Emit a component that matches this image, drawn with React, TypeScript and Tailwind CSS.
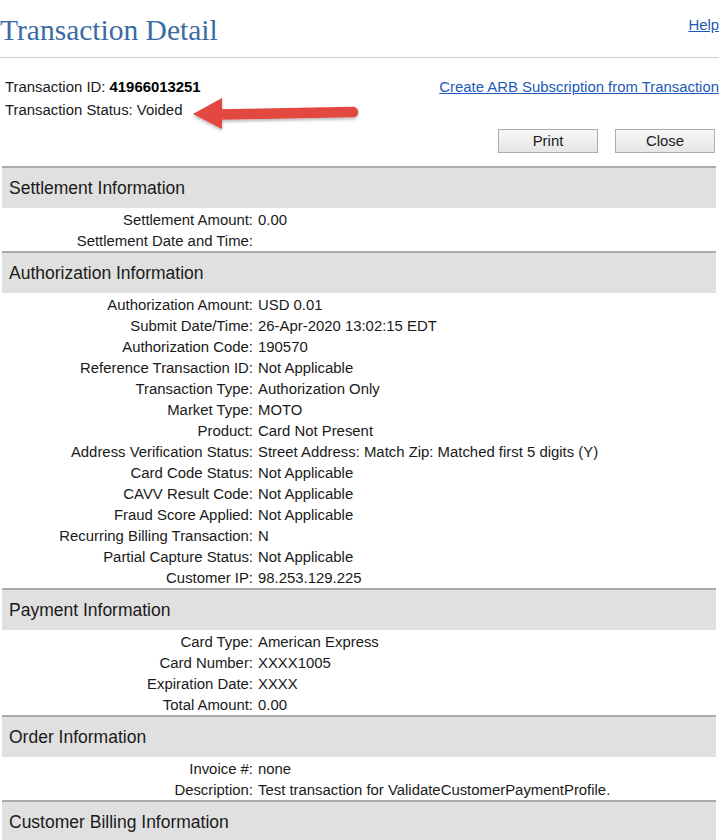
import React from "react";

type Row = [string, string];

const sections: { title: string; rows: Row[] }[] = [
  {
    title: "Settlement Information",
    rows: [
      ["Settlement Amount:", "0.00"],
      ["Settlement Date and Time:", ""],
    ],
  },
  {
    title: "Authorization Information",
    rows: [
      ["Authorization Amount:", "USD 0.01"],
      ["Submit Date/Time:", "26-Apr-2020 13:02:15 EDT"],
      ["Authorization Code:", "190570"],
      ["Reference Transaction ID:", "Not Applicable"],
      ["Transaction Type:", "Authorization Only"],
      ["Market Type:", "MOTO"],
      ["Product:", "Card Not Present"],
      ["Address Verification Status:", "Street Address: Match Zip: Matched first 5 digits (Y)"],
      ["Card Code Status:", "Not Applicable"],
      ["CAVV Result Code:", "Not Applicable"],
      ["Fraud Score Applied:", "Not Applicable"],
      ["Recurring Billing Transaction:", "N"],
      ["Partial Capture Status:", "Not Applicable"],
      ["Customer IP:", "98.253.129.225"],
    ],
  },
  {
    title: "Payment Information",
    rows: [
      ["Card Type:", "American Express"],
      ["Card Number:", "XXXX1005"],
      ["Expiration Date:", "XXXX"],
      ["Total Amount:", "0.00"],
    ],
  },
  {
    title: "Order Information",
    rows: [
      ["Invoice #:", "none"],
      ["Description:", "Test transaction for ValidateCustomerPaymentProfile."],
    ],
  },
  {
    title: "Customer Billing Information",
    rows: [],
  },
];

function Arrow() {
  return (
    <svg
      className="absolute left-[185px] top-[92px]"
      width="180"
      height="44"
      viewBox="0 0 180 44"
    >
      <defs>
        <filter id="sh" x="-10%" y="-30%" width="120%" height="170%">
          <feDropShadow dx="0" dy="2" stdDeviation="1.6" floodColor="#000" floodOpacity="0.28" />
        </filter>
      </defs>
      <g filter="url(#sh)">
        <line x1="33" y1="22.5" x2="168" y2="20" stroke="#e2463f" strokeWidth="10.5" strokeLinecap="round" />
        <polygon points="8,22 37,6 37,37" fill="#e2463f" />
      </g>
    </svg>
  );
}

export default function App() {
  return (
    <div
      className="relative w-[728px] h-[840px] overflow-hidden bg-white text-[#1a1a1a]"
      style={{ fontFamily: '"Liberation Sans", Arial, sans-serif' }}
    >
      <div className="w-[719px]">
        {/* Header */}
        <div className="h-[58px] border-b border-[#cfcfcf] flex justify-between items-start">
          <h1
            className="pt-[13px] text-[29.5px] leading-[34px] text-[#3a6ca3] font-normal"
            style={{ fontFamily: '"Liberation Serif", "Times New Roman", serif' }}
          >
            Transaction Detail
          </h1>
          <a className="pt-[16px] text-[14.9px] leading-[18px] text-[#1c5bb8] underline">
            Help
          </a>
        </div>

        {/* Info */}
        <div className="pt-[18px] text-[14.9px] leading-[23px]">
          <div className="flex justify-between">
            <div className="pl-[5px]">
              Transaction ID: <span className="font-bold text-black">41966013251</span>
            </div>
            <a className="text-[#1c5bb8] underline">
              Create ARB Subscription from Transaction
            </a>
          </div>
          <div className="pl-[5px]">Transaction Status: Voided</div>
        </div>

        <div className="mt-[7px] mb-[13px] flex justify-end gap-[17px] pr-[4px]">
          <button className="w-[100px] h-[24px] border border-[#adadad] bg-gradient-to-b from-[#f7f7f7] to-[#e6e6e6] text-[14.9px] text-[#1a1a1a]">
            Print
          </button>
          <button className="w-[100px] h-[24px] border border-[#adadad] bg-gradient-to-b from-[#f7f7f7] to-[#e6e6e6] text-[14.9px] text-[#1a1a1a]">
            Close
          </button>
        </div>

        {/* Sections */}
        <div className="ml-[2px] w-[714px]">
          {sections.map((s) => (
            <div key={s.title}>
              <div className="h-[42px] border-t-2 border-[#ababab] bg-[#e0e0e0] flex items-center pl-[7px] text-[17.5px] text-[#1a1a1a]">
                {s.title}
              </div>
              {s.rows.length > 0 && (
                <div className="pt-[1px] text-[14.9px]">
                  {s.rows.map(([l, v]) => (
                    <div key={l} className="grid grid-cols-[251px_1fr] h-[21px] pt-[1px] leading-[21px]">
                      <div className="text-right whitespace-nowrap">{l}</div>
                      <div className="pl-[5px] whitespace-nowrap">{v}</div>
                    </div>
                  ))}
                </div>
              )}
            </div>
          ))}
        </div>
      </div>
      <Arrow />
    </div>
  );
}
